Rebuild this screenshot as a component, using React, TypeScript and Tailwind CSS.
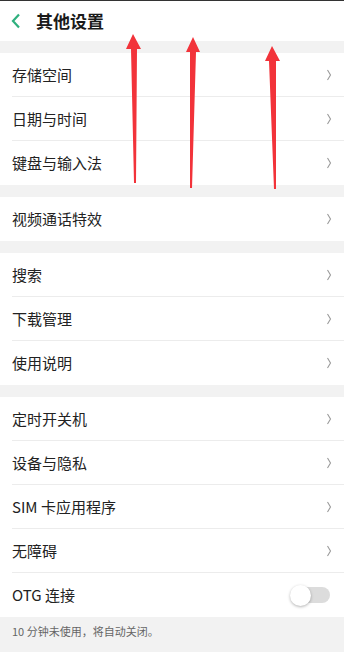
import React from 'react';

type Row = { label: string; toggle?: boolean };

const groups: Row[][] = [
  [{ label: '存储空间' }, { label: '日期与时间' }, { label: '键盘与输入法' }],
  [{ label: '视频通话特效' }],
  [{ label: '搜索' }, { label: '下载管理' }, { label: '使用说明' }],
  [
    { label: '定时开关机' },
    { label: '设备与隐私' },
    { label: 'SIM 卡应用程序' },
    { label: '无障碍' },
    { label: 'OTG 连接', toggle: true },
  ],
];

const Chevron = () => (
  <svg width="6" height="12" viewBox="0 0 6 12" className="shrink-0">
    <path d="M1.5 1 L4.5 6 L1.5 11" fill="none" stroke="#9a9a9a" strokeWidth="1.1" />
  </svg>
);

const Toggle = () => (
  <div className="relative w-[42px] h-[22px] flex items-center">
    <div className="absolute left-[8px] right-[2px] h-[16px] rounded-full bg-[#dcdcdc]" />
    <div className="absolute left-0 w-[21px] h-[21px] rounded-full bg-white shadow-[0_1px_3px_rgba(0,0,0,0.3)]" />
  </div>
);

const Arrows = () => (
  <svg className="absolute inset-0 pointer-events-none" width="344" height="652" viewBox="0 0 344 652">
    <g fill="#f2333a">
      <polygon points="133,33 126,48 131,48 134,182 136,182 137,48 141,48" />
      <polygon points="193,36 186,51 190,51 190,187 192,187 196,51 200,51" />
      <polygon points="272,45 265,60 269,60 274,188 276,188 276,60 280,60" />
    </g>
  </svg>
);

export default function App() {
  return (
    <div
      className="relative w-[344px] h-[652px] overflow-hidden bg-[#f2f2f2] border-t border-[#333]"
      style={{ fontFamily: '"Noto Sans CJK SC", "Noto Sans", sans-serif' }}
    >
      <div className="h-[40px] bg-white flex items-center">
        <svg width="10" height="16" viewBox="0 0 10 16" className="ml-[11px]">
          <path d="M8 1.5 L2 8 L8 14.5" fill="none" stroke="#2fb07e" strokeWidth="2.2" />
        </svg>
        <span className="ml-[15px] text-[17px] font-bold text-[#1a1a1a]">其他设置</span>
      </div>

      {groups.map((g, gi) => (
        <div key={gi} className="mt-[12px] bg-white">
          {g.map((r, ri) => (
            <div key={r.label} className="pl-[12px]">
              <div
                className={`h-[44px] flex items-center justify-between pr-[12px] ${
                  ri < g.length - 1 ? 'border-b border-[#ececec]' : ''
                }`}
              >
                <span className="text-[15px] leading-[20px] text-[#222]">{r.label}</span>
                {r.toggle ? <Toggle /> : <Chevron />}
              </div>
            </div>
          ))}
        </div>
      ))}

      <div className="pl-[12px] pt-[6px] text-[11px] leading-[16px] text-[#666]">10 分钟未使用，将自动关闭。</div>

      <Arrows />
    </div>
  );
}
